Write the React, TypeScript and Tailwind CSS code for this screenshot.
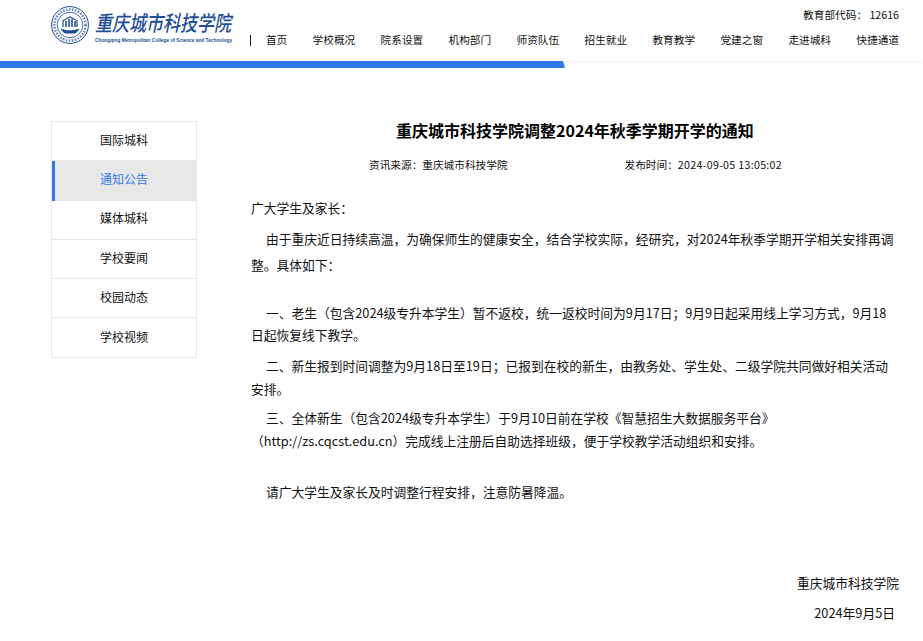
import React from 'react';

const NAV = ['首页', '学校概况', '院系设置', '机构部门', '师资队伍', '招生就业', '教育教学', '党建之窗', '走进城科', '快捷通道'];
const SIDE = ['国际城科', '通知公告', '媒体城科', '学校要闻', '校园动态', '学校视频'];

const Seal = () => (
  <svg width="38" height="38" viewBox="0 0 38 38" fill="none">
    <circle cx="19" cy="19" r="18.4" stroke="#1f4f96" strokeWidth="1" />
    <circle cx="19" cy="19" r="12.8" stroke="#1f4f96" strokeWidth="0.8" />
    <circle cx="19" cy="19" r="15.6" stroke="#1f4f96" strokeWidth="2.4" strokeDasharray="1.6 1.4" opacity="0.7" />
    <path d="M12 21V14.5L19 11l7 3.5V21" stroke="#1f4f96" strokeWidth="1.2" />
    <path d="M15 21v-6M18 21V13M21 21V13M24 21v-6" stroke="#1f4f96" strokeWidth="1.6" />
    <path d="M9.5 22.5c5 2.4 13 2.4 19 0-1 2.4-2.6 4-4.6 5h-9.6c-2-1-3.6-2.6-4.8-5z" fill="#1f4f96" />
  </svg>
);

export default function App() {
  return (
    <div className="min-h-[641px] bg-white text-[#111] font-['Noto_Sans_CJK_SC','Noto_Sans',sans-serif]">
      <header className="h-[61px] flex justify-between pl-[51px] pr-6 shadow-[0_1px_3px_rgba(0,0,0,0.06)]">
        <div className="flex items-start pt-[6px] gap-[6px]">
          <Seal />
          <div className="flex flex-col w-[137px] text-[#1f4f96]">
            <span className="text-[17px] leading-[24px] mt-[4px] font-medium italic whitespace-nowrap scale-y-125 origin-center">重庆城市科技学院</span>
            <span className="text-[4.8px] leading-[7px] mt-[3px] font-bold font-['Liberation_Sans',sans-serif] whitespace-nowrap">Chongqing Metropolitan College of Science and Technology</span>
          </div>
        </div>
        <div className="flex flex-col items-end">
          <div className="text-[10.67px] leading-[16px] pt-[7px]">{'教育部代码\uFF1A 12616'}</div>
          <nav className="flex items-center h-[16px] mt-[9px] text-[10.67px] leading-[16px]">
            <span className="w-px h-[11px] bg-[#222] mr-[15px]" />
            <div className="flex gap-[25.33px]">
              {NAV.map((n) => (
                <a key={n} className="whitespace-nowrap">{n}</a>
              ))}
            </div>
          </nav>
        </div>
      </header>

      <div className="h-[7px] w-[565px] bg-[#3179e8] [clip-path:polygon(0_0,563px_0,565px_100%,0_100%)]" />

      <main className="flex pl-[51px] pr-6 pt-[53px]">
        <aside className="w-[146px] h-[237px] shrink-0 border border-[#e8e8e8]">
          {SIDE.map((s) => (
            <div
              key={s}
              className={
                s === '通知公告'
                  ? 'h-[39.3px] pb-[3px] pr-[3px] flex items-center justify-center text-[12px] bg-[#e8e8e8] text-[#3179e8] border-l-[3px] border-[#3179e8]'
                  : 'h-[39.3px] pb-[3px] flex items-center justify-center text-[12px] border-b border-[#e8e8e8] last:border-b-0'
              }
            >
              {s}
            </div>
          ))}
        </aside>

        <article className="ml-[54px] flex-1 min-w-0">
          <h1 className="text-[16px] leading-[22px] -mt-[2px] font-bold text-center text-black">重庆城市科技学院调整2024年秋季学期开学的通知</h1>
          <div className="mt-[14px] h-[20px] flex text-[10.67px] leading-[20px]">
            <span className="ml-[118px]">{'资讯来源\uFF1A重庆城市科技学院'}</span>
            <span className="ml-[117px]">{'发布时间\uFF1A'}<span className="tracking-[0.3px]">2024-09-05 13:05:02</span></span>
          </div>
          <div className="mt-[20px] text-[12.75px]">
            <p className="leading-[26px]">{'广大学生及家长\uFF1A'}</p>
            <p className="mt-[5px] leading-[26px] indent-[15px]">{'由于重庆近日持续高温\uFF0C为确保师生的健康安全\uFF0C结合学校实际\uFF0C经研究\uFF0C对2024年秋季学期开学相关安排再调整。具体如下\uFF1A'}</p>
            <p className="h-[24px]" />
            <p className="leading-[22px] indent-[15px]">{'一、老生\uFF08包含2024级专升本学生\uFF09暂不返校\uFF0C统一返校时间为9月17日\uFF1B9月9日起采用线上学习方式\uFF0C9月18日起恢复线下教学。'}</p>
            <p className="mt-[8px] leading-[23px] indent-[15px]">{'二、新生报到时间调整为9月18日至19日\uFF1B已报到在校的新生\uFF0C由教务处、学生处、二级学院共同做好相关活动安排。'}</p>
            <p className="mt-[6px] leading-[23px] indent-[15px]">{'三、全体新生\uFF08包含2024级专升本学生\uFF09于9月10日前在学校《智慧招生大数据服务平台》\uFF08http://zs.cqcst.edu.cn\uFF09完成线上注册后自助选择班级\uFF0C便于学校教学活动组织和安排。'}</p>
            <p className="mt-[28px] leading-[23px] indent-[15px]">{'请广大学生及家长及时调整行程安排\uFF0C注意防暑降温。'}</p>
            <p className="mt-[68px] leading-[23px] text-right">重庆城市科技学院</p>
            <p className="mt-[7px] leading-[23px] text-right pr-[4px]">2024年9月5日</p>
          </div>
        </article>
      </main>
    </div>
  );
}
